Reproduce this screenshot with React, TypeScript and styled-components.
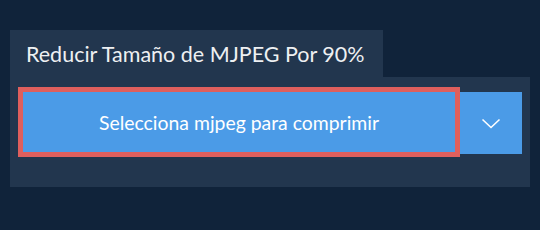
import React from "react";
import styled, { createGlobalStyle } from "styled-components";

const Global = createGlobalStyle`
  html, body { margin: 0; padding: 0; background: #10233a; }
  body { font-family: Lato, "Open Sans", sans-serif; }
`;

const Page = styled.div`
  width: 540px;
  height: 230px;
  background: #10233a;
  padding: 30px 10px 0 10px;
  box-sizing: border-box;
`;

const Tab = styled.div`
  display: inline-flex;
  align-items: center;
  height: 47px;
  padding: 1px 18px 0 16px;
  background: #22364e;
  color: #eef0f2;
  font-size: 21.5px;
  font-weight: 400;
  box-sizing: border-box;
`;

const Panel = styled.div`
  width: 520px;
  height: 110px;
  background: #22364e;
  padding: 15px 8px 0 13px;
  box-sizing: border-box;
  display: flex;
  align-items: flex-start;
`;

const MainButton = styled.button`
  width: 432px;
  height: 60px;
  margin: 0 5px 0 0;
  padding: 0;
  border: none;
  outline: 5px solid #df5f5d;
  background: #4b9be7;
  color: #ffffff;
  font-family: Lato, "Open Sans", sans-serif;
  font-size: 19.4px;
  font-weight: 400;
  display: flex;
  align-items: center;
  justify-content: center;
  cursor: pointer;
`;

const DropButton = styled.button`
  width: 62px;
  height: 62px;
  padding: 0;
  border: none;
  background: #4b9be7;
  display: flex;
  align-items: center;
  justify-content: center;
  cursor: pointer;
`;

export default function App() {
  return (
    <>
      <Global />
      <Page>
        <Tab>Reducir Tamaño de MJPEG Por 90%</Tab>
        <Panel>
          <MainButton>Selecciona mjpeg para comprimir</MainButton>
          <DropButton>
            <svg width="20" height="11" viewBox="0 0 20 11">
              <path d="M1.5 1.5 L10 9.5 L18.5 1.5" fill="none" stroke="#ffffff" strokeWidth="1.6" />
            </svg>
          </DropButton>
        </Panel>
      </Page>
    </>
  );
}
